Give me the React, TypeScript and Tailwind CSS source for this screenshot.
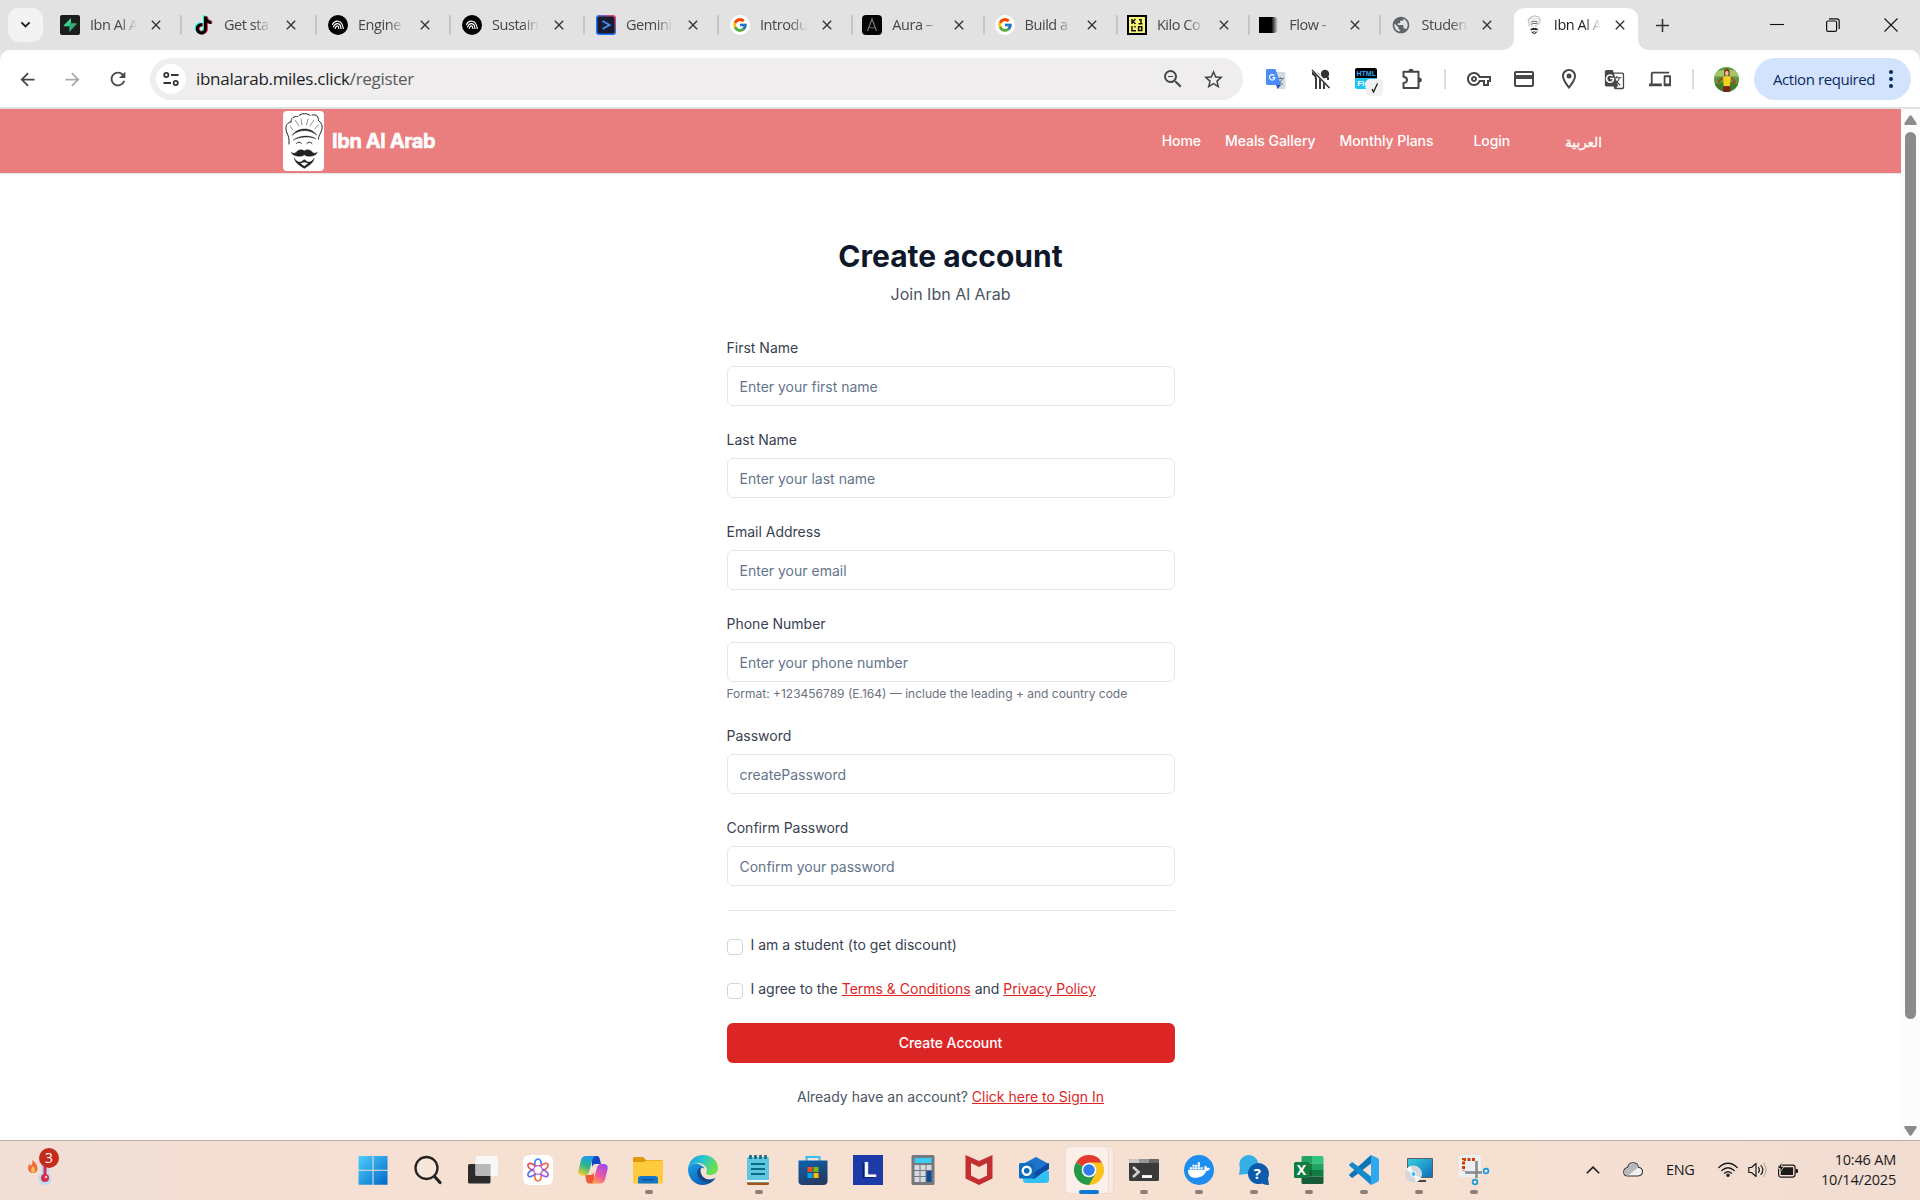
import React, { type ReactNode } from "react";
import {
  MdArrowBack,
  MdArrowForward,
  MdClose,
  MdCreditCard,
  MdDevices,
  MdGTranslate,
  MdOutlineLocationOn,
  MdOutlineVpnKey,
  MdPublic,
  MdRefresh,
  MdStarBorder,
  MdZoomOut,
} from "react-icons/md";
import { FcGoogle } from "react-icons/fc";
import { FaDocker } from "react-icons/fa";
import { IoLogoTiktok } from "react-icons/io5";

/* ---------- favicons ---------- */

function SupabaseIcon() {
  return (
    <svg viewBox="0 0 20 20" className="size-5">
      <rect width="20" height="20" rx="2" fill="#1c1c1c" />
      <path d="M11 3v8.200H4.200q-1 0-.4-1z" fill="#3ecf8e" />
      <path d="M9.300 17V8.300h6.800q1 0 .4 1z" fill="#2fae78" />
    </svg>
  );
}

function TiktokIcon() {
  return (
    <span className="relative size-5">
      <IoLogoTiktok className="absolute top-0 -left-px size-[19px] text-[#25f4ee]" />
      <IoLogoTiktok className="absolute top-px left-px size-[19px] text-[#fe2c55]" />
      <IoLogoTiktok className="absolute top-[0.5px] left-0 size-[19px] text-black" />
    </span>
  );
}

function ArcIcon() {
  return (
    <svg viewBox="0 0 20 20" className="size-5" fill="none" stroke="#fff" strokeWidth="1.200" strokeLinecap="round">
      <circle cx="10" cy="10" r="10" fill="#000" stroke="none" />
      <path d="M4.500 9.500C7 4.500 14 4.500 15.300 13.500" />
      <path d="M5.500 12C7.500 7 12.500 7.500 13 13.500" />
      <path d="M7.200 13.500C8.500 9.500 10.800 10.500 10.800 13.500" />
    </svg>
  );
}

function GeminiCodeIcon() {
  return (
    <svg viewBox="0 0 20 20" className="size-5">
      <defs>
        <linearGradient id="gem" x1="0" y1="1" x2="1" y2="0">
          <stop offset="0.4" stopColor="#1a73f8" />
          <stop offset="1" stopColor="#ff3b5c" />
        </linearGradient>
      </defs>
      <rect width="20" height="20" rx="3" fill="url(#gem)" />
      <rect x="1.500" y="1.500" width="17" height="17" rx="2" fill="#1b1b30" />
      <path d="m6.500 6 7 4-7 4" fill="none" stroke="#3f8cff" strokeWidth="2" />
    </svg>
  );
}

function GoogleIcon() {
  return (
    <span className="flex size-5 items-center justify-center rounded-full bg-white">
      <FcGoogle className="size-4" />
    </span>
  );
}

function AuraIcon() {
  return (
    <svg viewBox="0 0 20 20" className="size-5" fill="none" stroke="#777" strokeWidth="1.200">
      <rect width="20" height="20" rx="4" fill="#050505" stroke="none" />
      <path d="M5.500 16 10 4l4.500 12M7.500 12.500 12.500 13" />
    </svg>
  );
}

function KiloIcon() {
  return (
    <svg viewBox="0 0 20 20" className="size-5" fill="none" stroke="#111" strokeWidth="1.500">
      <rect x="1" y="1" width="18" height="18" fill="#f8f674" stroke="#000" strokeWidth="2" />
      <path d="M5 4v5M8.500 4 6 6.500 8.500 9M12 4.800h2V9M11.500 8.800h4M5 11v4.700h4M8 11v1.500M11.600 11.800h3.200v3.600h-3.200z" />
    </svg>
  );
}

function FlowIcon() {
  return (
    <svg viewBox="0 0 20 20" className="size-5">
      <defs>
        <linearGradient id="flow">
          <stop offset="0.650" stopColor="#000" />
          <stop offset="1" stopColor="#000" stopOpacity="0" />
        </linearGradient>
      </defs>
      <path d="M0 2h14q5 0 5 4v8q0 4-5 4H0z" fill="url(#flow)" />
    </svg>
  );
}

function ChefFace({ className }: { className: string }) {
  return (
    <svg viewBox="0 0 41 60" className={className} fill="none" stroke="#222" strokeLinecap="round">
      <path
        d="M6 33C6.500 28 5.500 25 4 22 1.500 16 3.500 12 7.500 11M8 11c0-4 3-6 6.500-5.500M16 4.500c3-2.500 8-2.500 11-.2M29 4c5-1 6.500 2 6.500 5.500M36 10c3.500 3 4 6 2 11-2 4-2.500 5-2.500 7"
        strokeWidth="1"
      />
      <path d="M12 9l4 6M18 8l1 6M25 8l-1.500 6M31 9l-4 6M7 15l3 4M35 14l-3 4" strokeWidth="0.500" />
      <path d="M9.500 24c5-8 19-8 24 0-6-6-18-6-24 0z" fill="#222" strokeWidth="0.500" />
      <path d="M10.500 29c5-4.500 17-5.500 22.500-1-6-3-17-2.500-22.500 1z" fill="#222" strokeWidth="0.400" />
      <path d="M13.500 32.500q2.500-3 5 0M24 32.500q2.500-3 5 0" strokeWidth="1" />
      <path
        d="M21.300 40c-2-2-6-1.500-7.500.7-1.500 1.800-4 2-5.500.5 1 4 10 5.500 13 2.500 3 3 12 1.500 13-2.500-1.500 1.500-4 1.300-5.500-.5C27.300 38.500 23.300 38 21.300 40z"
        fill="#222"
        strokeWidth="0.400"
      />
      <path
        d="M11.300 47c.5 5 5.500 7.500 10 10.500 4.500-3 9.500-5.500 10-10.500-2 3.500-4 4-6.500 4L21.300 48.500 17.800 51c-2.500 0-4.500-.5-6.500-4zm6 5.300 4-1.300 4 1.300-4 3z"
        fill="#222"
        fillRule="evenodd"
        strokeWidth="0.300"
      />
    </svg>
  );
}

/* ---------- browser chrome ---------- */

const tabs: { title: string; icon: ReactNode }[] = [
  { title: "Ibn Al A", icon: <SupabaseIcon /> },
  { title: "Get sta", icon: <TiktokIcon /> },
  { title: "Engine", icon: <ArcIcon /> },
  { title: "Sustain", icon: <ArcIcon /> },
  { title: "Gemini", icon: <GeminiCodeIcon /> },
  { title: "Introdu", icon: <GoogleIcon /> },
  { title: "Aura –", icon: <AuraIcon /> },
  { title: "Build a", icon: <GoogleIcon /> },
  { title: "Kilo Co", icon: <KiloIcon /> },
  { title: "Flow -", icon: <FlowIcon /> },
  { title: "Studen", icon: <MdPublic className="size-[22px] text-[#5f6368]" /> },
  { title: "Ibn Al A", icon: <ChefFace className="h-5 w-5" /> },
];

function TabStrip() {
  return (
    <div className="flex h-[50px] items-center bg-[#e2e2e2]">
      <div className="ml-2 flex h-[34px] w-[35px] items-center justify-center rounded-[11px] bg-[#f3f3f3]">
        <svg viewBox="0 0 12 8" className="w-[11px]" fill="none" stroke="#1f1f1f" strokeWidth="2">
          <path d="m1.500 1.500 4.500 4.500 4.500-4.500" />
        </svg>
      </div>
      <div className="ml-[5px] flex h-full">
        {tabs.map((tab, i) => {
          const active = i === tabs.length - 1;
          return (
            <div key={i} className={i < 5 ? "relative h-full w-[134px]" : "relative h-full w-[132.300px]"}>
              {active && (
                <svg viewBox="0 0 150 42" className="absolute -left-3 bottom-0 h-[42px] w-[150px]">
                  <path d="M0 42q14 0 14-13V12Q14 0 26 0h100q12 0 12 12v17q0 13 12 13z" fill="#fff" />
                </svg>
              )}
              <div className="relative flex h-full items-center pl-3">
                <span className="flex size-5 shrink-0 items-center justify-center">{tab.icon}</span>
                <span
                  className={
                    "ml-[10px] w-[50px] shrink-0 whitespace-nowrap font-['Open_Sans'] text-[14.500px] tracking-[-0.450px] [mask-image:linear-gradient(to_right,#000_60%,transparent_94%)] " +
                    (active ? "text-[#1f1f1f]" : "text-[#45474a]")
                  }
                >
                  {tab.title}
                </span>
                <MdClose className={i > 0 && i < 9 ? "ml-[9px] size-4 shrink-0 text-[#333]" : "ml-2 size-4 shrink-0 text-[#333]"} />
                {i < tabs.length - 2 && <span className="ml-4 h-5 w-[2px] shrink-0 rounded bg-[#c5c5c5]" />}
              </div>
            </div>
          );
        })}
      </div>
      <svg viewBox="0 0 14 14" className="ml-[12px] size-[13px]" stroke="#333" strokeWidth="1.700">
        <path d="M7 0v14M0 7h14" />
      </svg>
      <div className="ml-auto flex items-center">
        <svg viewBox="0 0 14 14" className="mr-[42px] size-[14px]" stroke="#111" strokeWidth="1.100">
          <path d="M0 6.500h14" />
        </svg>
        <svg viewBox="0 0 14 14" className="mr-[44px] size-[14px]" fill="none" stroke="#111" strokeWidth="1.200">
          <rect x="0.600" y="3" width="10" height="10.400" rx="1.500" />
          <path d="M3 .8h7.500q2.700 0 2.700 2.700v7.500" />
        </svg>
        <svg viewBox="0 0 14 14" className="mr-[22px] size-[14px]" stroke="#111" strokeWidth="1.100">
          <path d="m.5.5 13 13m0-13-13 13" />
        </svg>
      </div>
    </div>
  );
}

function Slot({ children }: { children: ReactNode }) {
  return <span className="flex w-[45.300px] shrink-0 items-center justify-center">{children}</span>;
}

function GoogleTranslateIcon() {
  return (
    <svg viewBox="0 0 22 22" className="size-[22px]">
      <path d="M8 4h11q1.500 0 1.500 1.500v14q0 1.500-1.500 1.500h-6z" fill="#d5d8dc" />
      <path d="M11.500 10.500h7.500M15.200 9v1.500M17.500 10.500q-1.500 4-5 6M13 12.500q2 3 5 4" stroke="#607d8b" fill="none" />
      <path d="m11 17 5 0-3.500 4z" fill="#3451b5" />
      <path d="M2 1h8.500L16 17H2.500Q1 17 1 15.500V2.500Q1 1 2 1z" fill="#4b8df8" />
      <path d="M9.300 7.700A2.700 2.700 0 1 0 9.800 9.700H7.400" stroke="#fff" strokeWidth="1.200" fill="none" />
    </svg>
  );
}

function NoIndexIcon() {
  return (
    <svg viewBox="0 0 20 20" className="size-5" fill="none" stroke="#333" strokeWidth="1.900">
      <circle cx="14" cy="5" r="4.200" fill="#333" stroke="none" />
      <path d="M2 3v2q3 1 3 5v10M6 4q3 2 3 6v10M9.500 9q3.500 1 3.500 5v6M17 8v3" />
      <path d="M1 0l18 18.500" stroke="#fff" strokeWidth="3" />
      <path d="M1 1l17.500 18" strokeWidth="1.500" />
    </svg>
  );
}

function HtmlFigmaIcon() {
  return (
    <span className="relative h-[22px] w-[22px]">
      <span className="absolute inset-x-0 top-0 h-[10px] rounded-t-[2px] bg-black text-center font-['Liberation_Sans'] text-[7px] leading-[11px] font-bold text-[#35a7ff]">
        HTML
      </span>
      <span className="absolute inset-x-0 top-[10px] h-[11px] rounded-b-[2px] bg-[#20c4f4] pl-[2px] font-['Liberation_Sans'] text-[8px] leading-[11px] font-bold text-white">
        Fig
      </span>
      <span className="absolute top-[11px] left-[11px] flex h-[17px] w-[17px] items-center justify-center rounded-[4px] bg-[#f1f1f1]">
        <svg viewBox="0 0 10 10" className="size-[10px]" fill="none" stroke="#111" strokeWidth="1.200">
          <path d="m2 6 1.500 3L7.500.5" />
        </svg>
      </span>
    </span>
  );
}

function PuzzleIcon() {
  return (
    <svg viewBox="0 0 22 22" className="size-[22px]" fill="none" stroke="#474747" strokeWidth="2" strokeLinejoin="round">
      <path d="M2.500 3.800h15V20h-15v-5q3.500-.5 3.500-3.100T2.500 8.800z" />
      <path d="M7.500 3.500a2.500 2.800 0 0 1 5 0zM18 9.400a2.800 2.500 0 0 1 0 5z" fill="#474747" stroke="none" />
    </svg>
  );
}

function Avatar() {
  return (
    <svg viewBox="0 0 26 26" className="size-[25px]">
      <defs>
        <clipPath id="avatar">
          <circle cx="13" cy="13" r="13" />
        </clipPath>
      </defs>
      <g clipPath="url(#avatar)">
        <rect width="26" height="26" fill="#5c9a3c" />
        <path d="M0 6q8-5 26-2v6H0z" fill="#a6c46a" />
        <path d="M0 18q13-4 26 0v8H0z" fill="#3f7d2c" />
        <path d="M10.500 3q3-2.500 5.500 0l.5 6h-6z" fill="#7b3a1e" />
        <ellipse cx="13.300" cy="6.500" rx="1.800" ry="2.600" fill="#f1bd92" />
        <path d="M9.500 10.500q4-2 8 0L16.500 20H10z" fill="#f3d21c" />
        <path d="M9 11 4.500 15l2 1M18 11l4 4.500-4 1.500" fill="none" stroke="#b33a25" strokeWidth="1.600" />
        <path d="M9.500 20h7.500v6H9.500z" fill="#7c2018" />
      </g>
    </svg>
  );
}

function Toolbar() {
  return (
    <div className="h-[59px] bg-[#e2e2e2]">
      <div className="flex h-[57px] items-center rounded-t-[10px] bg-white pt-px text-[#474747]">
        <MdArrowBack className="ml-[17px] size-[21px]" />
        <MdArrowForward className="ml-6 size-[21px] text-[#aaa]" />
        <MdRefresh className="ml-[24px] size-[22px]" />
        <div className="ml-[21px] flex h-[42px] w-[1093px] items-center rounded-full bg-[#efedee]">
          <span className="ml-[6px] flex size-[30px] items-center justify-center rounded-full bg-white">
            <svg viewBox="0 0 16 16" className="size-4" fill="none" stroke="#333" strokeWidth="1.800">
              <circle cx="3.300" cy="4" r="2.100" />
              <path d="M8 4h7.500M.5 12H8" />
              <circle cx="12.700" cy="12" r="2.100" />
            </svg>
          </span>
          <span className="ml-[10px] font-['Open_Sans'] text-[17px] tracking-[-0.290px] whitespace-nowrap text-[#1f1f1f]">
            ibnalarab.miles.click<span className="text-[#5a5a5a]">/register</span>
          </span>
          <MdZoomOut className="ml-auto size-6" />
          <MdStarBorder className="mr-[18px] ml-[17px] size-[23px]" />
        </div>
        <div className="ml-[10px] flex items-center">
          <Slot><GoogleTranslateIcon /></Slot>
          <Slot><NoIndexIcon /></Slot>
          <Slot><HtmlFigmaIcon /></Slot>
          <Slot><PuzzleIcon /></Slot>
          <span className="mx-[10px] h-5 w-[2px] bg-[#dcdcdc]" />
          <Slot><MdOutlineVpnKey className="size-[24px]" /></Slot>
          <Slot><MdCreditCard className="size-[24px]" /></Slot>
          <Slot><MdOutlineLocationOn className="size-[24px]" /></Slot>
          <Slot><MdGTranslate className="size-[21px]" /></Slot>
          <Slot><MdDevices className="size-[22px]" /></Slot>
          <span className="ml-[9px] h-5 w-[2px] bg-[#dcdcdc]" />
        </div>
        <span className="ml-5"><Avatar /></span>
        <div className="mr-[9px] ml-auto flex h-[42px] w-[157px] items-center rounded-full bg-[#d3e3fd] pl-[19px]">
          <span className="font-['Open_Sans'] text-[15px] tracking-[-0.420px] whitespace-nowrap text-[#0b2a5e]">
            Action required
          </span>
          <svg viewBox="0 0 4 18" className="mr-[18px] ml-auto h-[18px] w-1" fill="#0b2a5e">
            <circle cx="2" cy="2" r="2" />
            <circle cx="2" cy="9" r="2" />
            <circle cx="2" cy="16" r="2" />
          </svg>
        </div>
      </div>
    </div>
  );
}

/* ---------- page ---------- */

function SiteNav() {
  return (
    <header className="flex h-[65px] items-center border-b border-[#e5e7eb] bg-[#ea7d7d] pr-[299px] pl-[283px] text-white">
      <div className="flex h-[60px] w-[41px] items-center justify-center rounded-[4px] bg-white">
        <ChefFace className="h-[60px] w-[41px]" />
      </div>
      <span className="ml-2 text-xl font-bold tracking-[-0.400px] whitespace-nowrap [-webkit-text-stroke:0.500px_white]">
        Ibn Al Arab
      </span>
      <nav className="ml-auto flex items-center text-sm font-medium tracking-[-0.060px] whitespace-nowrap">
        <a>Home</a>
        <a className="ml-6">Meals Gallery</a>
        <a className="ml-6">Monthly Plans</a>
        <a className="ml-10">Login</a>
        <a className="ml-[55px] pt-px font-['DejaVu_Sans'] text-[13.500px] leading-5 tracking-normal [-webkit-text-stroke:0.300px_white]">العربية</a>
      </nav>
    </header>
  );
}

function Field({ label, placeholder, hint, type = "text" }: { label: string; placeholder: string; hint?: string; type?: string }) {
  return (
    <div>
      <label className="mb-2 block text-sm leading-5 text-[#374151]">{label}</label>
      <input
        type={type}
        placeholder={placeholder}
        className="block h-10 w-full rounded-md border border-[#e2e8f0] bg-white px-3 text-sm placeholder:text-[#64748b]"
      />
      {hint && <p className="mt-1 text-xs leading-4 text-[#6b7280]">{hint}</p>}
    </div>
  );
}

function Check({ children }: { children: ReactNode }) {
  return (
    <label className="flex h-5 items-start text-sm leading-5 whitespace-nowrap text-[#374151]">
      <span className="mt-1 mr-2 size-4 shrink-0 rounded-[4px] border border-[#d1d5db] bg-white" />
      <span>{children}</span>
    </label>
  );
}

function Register() {
  return (
    <main className="mx-auto w-[448px] pt-16">
      <h1 className="text-center text-3xl leading-9 font-bold text-[#0f172a]">Create account</h1>
      <p className="mt-2 text-center text-base leading-6 text-[#4b5563]">Join Ibn Al Arab</p>
      <form className="mt-8 flex flex-col gap-6">
        <Field label="First Name" placeholder="Enter your first name" />
        <Field label="Last Name" placeholder="Enter your last name" />
        <Field label="Email Address" placeholder="Enter your email" />
        <Field
          label="Phone Number"
          placeholder="Enter your phone number"
          hint="Format: +123456789 (E.164) — include the leading + and country code"
        />
        <Field label="Password" placeholder="createPassword" type="password" />
        <Field label="Confirm Password" placeholder="Confirm your password" type="password" />
        <hr className="border-[#e2e8f0]" />
        <Check>I am a student (to get discount)</Check>
        <Check>
          I agree to the <a className="text-[#dc2626] underline">Terms &amp; Conditions</a> and{" "}
          <a className="text-[#dc2626] underline">Privacy Policy</a>
        </Check>
        <button type="button" className="h-10 rounded-md bg-[#dc2626] text-sm font-medium tracking-[-0.060px] text-white">
          Create Account
        </button>
        <p className="text-center text-sm leading-5 text-[#4b5563]">
          Already have an account? <a className="text-[#dc2626] underline">Click here to Sign In</a>
        </p>
      </form>
    </main>
  );
}

function Scrollbar() {
  return (
    <div className="flex w-[19px] shrink-0 flex-col items-center bg-[#fcfcfc] text-[#8b8b8b]">
      <svg viewBox="0 0 13 10" className="mt-[6px] h-[10px] w-[13px]" fill="currentColor">
        <path d="M5.500.8q1-1 2 0L12.500 8q.5 2-1 2h-10q-1.500 0-1-2z" />
      </svg>
      <div className="mt-[7px] h-[887px] w-[11px] rounded-full bg-[#8b8b8b]" />
      <svg viewBox="0 0 13 10" className="mt-auto mb-[4px] h-[10px] w-[13px] rotate-180" fill="currentColor">
        <path d="M5.500.8q1-1 2 0L12.500 8q.5 2-1 2h-10q-1.500 0-1-2z" />
      </svg>
    </div>
  );
}

/* ---------- taskbar icons ---------- */

const box = "size-[30px]";

function StartIcon() {
  return (
    <svg viewBox="0 0 30 30" className={box}>
      <defs>
        <linearGradient id="win" x1="0" y1="0" x2="1" y2="1">
          <stop stopColor="#4fd0ff" />
          <stop offset="1" stopColor="#0067c8" />
        </linearGradient>
      </defs>
      <path fill="url(#win)" d="M.5 1.500q0-.5.500-.5h13.500v13.700H.500zM15.500 1H29q.5 0 .5.500v13.200h-14zM.5 15.700h14v14H1q-.5 0-.5-.5zM15.500 15.700h14v13.500q0 .5-.5.500H15.500z" />
    </svg>
  );
}

function SearchIcon() {
  return (
    <svg viewBox="0 0 30 30" className={box} fill="none" stroke="#222" strokeWidth="2.300" strokeLinecap="round">
      <circle cx="13.500" cy="13" r="11" fill="#f9ece5" fillOpacity=".5" />
      <path d="m22 22 5 5.500" strokeWidth="3.200" />
    </svg>
  );
}

function TaskViewIcon() {
  return (
    <svg viewBox="0 0 30 30" className={box}>
      <rect x="0" y="9" width="22.500" height="19.500" rx="1.500" fill="#2c2c2c" />
      <rect x="7.500" y="1" width="22.500" height="20" rx="1.500" fill="#f8f8f8" fillOpacity=".92" />
      <path d="M7.500 9h15v12H9q-1.500 0-1.500-1.500z" fill="#b8b8b8" />
    </svg>
  );
}

function FlowerIcon() {
  return (
    <svg viewBox="0 0 30 30" className={box} fill="none" strokeWidth="1.700">
      <rect width="30" height="30" rx="6" fill="#fff" />
      <path d="M11.500 11.500q0-7.500 3.500-7.500t3.500 7.500" stroke="#3f83f0" />
      <path d="M11.500 18.500q0 7.500 3.500 7.500t3.500-7.500" stroke="#f4743b" />
      <path d="M13 11Q6 6.500 5 9.500T10.500 16" stroke="#ea4d5a" />
      <path d="M17 11q7-4.500 8-1.500T19.500 16" stroke="#f0644e" />
      <path d="M10.500 14Q4 17.500 5 20.500T13 19" stroke="#5a6de8" />
      <path d="M19.500 14q6.500 3.500 5.500 6.500T17 19" stroke="#9b59e0" />
      <circle cx="15" cy="15" r="4.300" stroke="#b65bd2" strokeWidth="1.200" />
    </svg>
  );
}

function CopilotIcon() {
  return (
    <svg viewBox="0 0 30 30" className={box}>
      <defs>
        <linearGradient id="cpa" x1="0.600" y1="0" x2="0.200" y2="1">
          <stop stopColor="#1c9cf0" />
          <stop offset=".5" stopColor="#2db58a" />
          <stop offset="1" stopColor="#ffd02e" />
        </linearGradient>
        <linearGradient id="cpb" x1="0.700" y1="0" x2="0.200" y2="1">
          <stop stopColor="#a04cf0" />
          <stop offset=".55" stopColor="#f0579b" />
          <stop offset="1" stopColor="#ffa64d" />
        </linearGradient>
      </defs>
      <path d="M14 1h5q2 0 2.500 2l1.500 6h-6q-2 0-3 3z" fill="#1146c7" />
      <path d="M16 28.500h-5q-2 0-2.500-2L7 20h6q2 0 3-3z" fill="#f05a35" />
      <path d="M8 1h9.500q-2 0-3 3.500L11 17q-1 3.500-4 3.500H4Q-.5 20.500.500 15L3 5q1-4 5-4z" fill="url(#cpa)" />
      <path d="M22 28.500h-9.500q2 0 3-3.500L19 12.500q1-3.500 4-3.500h3q4.500 0 3.500 5.500L27 24.500q-1 4-5 4z" fill="url(#cpb)" />
    </svg>
  );
}

function ExplorerIcon() {
  return (
    <svg viewBox="0 0 30 30" className={box}>
      <path d="M0 3.500Q0 2 1.500 2H10l3 3h15.500Q30 5 30 6.500V10H0z" fill="#dc9a06" />
      <path d="M0 7h11l2-1.500h17V27q0 1.500-1.500 1.500h-27Q0 28.500 0 27z" fill="#fecb3e" />
      <path d="M5 28.500V24q0-3 3-3h14q3 0 3 3v4.500z" fill="#1476c9" />
      <path d="M9 24.700h12" stroke="#0b4d8f" strokeWidth="1.300" />
    </svg>
  );
}

function EdgeIcon() {
  return (
    <svg viewBox="0 0 30 30" className={box}>
      <defs>
        <linearGradient id="edt" x1="0" y1="0" x2="1" y2="0.400">
          <stop stopColor="#1b9de0" />
          <stop offset=".5" stopColor="#2ac5cf" />
          <stop offset="1" stopColor="#6be04b" />
        </linearGradient>
        <linearGradient id="edb" x1="0" y1="0" x2="1" y2="1">
          <stop stopColor="#1aa0ea" />
          <stop offset="1" stopColor="#0b4aa0" />
        </linearGradient>
      </defs>
      <path d="M0 14C1 5 7 0 15 0c9 0 15 6 15 13 0 5-4 7-7.500 7-4 0-5-1.500-4-3 1-2 .5-6-5.500-8.500C8 7 2 9 0 14z" fill="url(#edt)" />
      <path d="M0 14C2 8 8 7.500 12.500 10c3 1.500 4 3.500 4 3.500-4-2-6 2-4.500 6 2 5 9 7 15.500 3.500C25 27 20 30 15 30 6 30 0 23 0 14z" fill="url(#edb)" />
      <path d="M13 12q-5.500 3-3 9.500Q13 27.500 22 27.500q3-1.500 5.500-4.500-6 3-11 0-5.500-4-3.500-11z" fill="#114a8b" />
    </svg>
  );
}

function NotepadIcon() {
  return (
    <svg viewBox="0 0 30 30" className={box}>
      <rect x="4" y="2" width="22" height="26" rx="1.500" fill="#5fc6df" />
      <path d="M4 25h22v2H4z" fill="#f5f5f5" />
      <path d="M4 27.500h22v1q0 1.500-1.500 1.500h-19Q4 30 4 28.500z" fill="#a85416" />
      <path d="M8 9h14M8 14h14M8 19h14" stroke="#0b6a86" strokeWidth="2" />
      <path d="M7.500 0v4M12.500 0v4M17.500 0v4M22.500 0v4" stroke="#176883" strokeWidth="2.600" />
    </svg>
  );
}

function StoreIcon() {
  return (
    <svg viewBox="0 0 30 30" className={box}>
      <defs>
        <linearGradient id="st" x1="0" y1="0" x2="0.500" y2="1">
          <stop stopColor="#0b63b3" />
          <stop offset="1" stopColor="#243a62" />
        </linearGradient>
      </defs>
      <path d="M8.500 7V2h13v5" fill="none" stroke="#33bff3" strokeWidth="2" />
      <path d="M.5 5.500h29V26q0 4-4 4h-21q-4 0-4-4z" fill="url(#st)" />
      <path d="M9.500 12h5v5h-5z" fill="#f25022" />
      <path d="M15.500 12h5v5h-5z" fill="#7fba00" />
      <path d="M9.500 18h5v5h-5z" fill="#00a4ef" />
      <path d="M15.500 18h5v5h-5z" fill="#ffb900" />
    </svg>
  );
}

function LetterIcon() {
  return (
    <span className="flex size-[30px] items-center justify-center bg-[#1c3ba8] pl-[3px] font-['Liberation_Sans'] text-[22px] leading-none font-bold text-white [text-shadow:-2px_1px_0_#0d1e66]">
      L
    </span>
  );
}

function CalculatorIcon() {
  return (
    <svg viewBox="0 0 30 30" className={box}>
      <rect x="3.500" width="23" height="30" rx="1.500" fill="#75797f" />
      <rect x="6.500" y="3" width="17" height="5" fill="#3ccbf4" />
      <path d="M6.500 10h5v5h-5zM12.500 10h5v5h-5zM18.500 10h5v5h-5zM6.500 16h5v5h-5zM12.500 16h5v5h-5zM6.500 22h5v5h-5zM12.500 22h5v5h-5z" fill="#d6dbe0" />
      <path d="M18.500 16h5v11h-5z" fill="#0f4a92" />
    </svg>
  );
}

function McafeeIcon() {
  return (
    <svg viewBox="0 0 30 30" className={box}>
      <path d="M1.500 0 15 6 28.500 0v23.500L15 30 1.500 23.500zM7 8v12.500l8 4 8-4V8l-8 4z" fill="#c12f31" fillRule="evenodd" />
    </svg>
  );
}

function OutlookIcon() {
  return (
    <svg viewBox="0 0 30 30" className={box}>
      <path d="M4 9 17 2l13 7v5L4 22z" fill="#1c73c8" />
      <path d="m15 18 15-10v6L15 24z" fill="#0a3f96" />
      <path d="M4 16h26v9q0 3-3 3H7q-3 0-3-3z" fill="#33c0f4" />
      <path d="M4 17h11L30 9v4L15 24z" fill="#0a4aa5" />
      <rect y="8" width="15.500" height="15.500" rx="1.500" fill="#0f6cbd" />
      <circle cx="7.700" cy="15.700" r="4" fill="none" stroke="#fff" strokeWidth="2.400" />
    </svg>
  );
}

function ChromeIcon() {
  return (
    <svg viewBox="0 0 30 30" className={box}>
      <path d="M15 15 2 7.500A15 15 0 0 1 28 7.500z" fill="#e23b2e" />
      <path d="M15 15V7.500h13A15 15 0 0 1 15 30z" fill="#fcc31e" />
      <path d="M15 15l6.500 3.700L15 30A15 15 0 0 1 2 7.500z" fill="#259a48" />
      <circle cx="15" cy="15" r="7.300" fill="#fff" />
      <circle cx="15" cy="15" r="5.800" fill="#2f7cee" />
    </svg>
  );
}

function TerminalIcon() {
  return (
    <svg viewBox="0 0 30 30" className={box}>
      <rect y="4" width="30" height="22" rx="1.500" fill="#3a3a3a" />
      <path d="M0 8V5.500Q0 4 1.500 4H10v4z" fill="#c8c8c8" />
      <path d="M10 4h10v4H10z" fill="#969696" />
      <path d="M20 4h8.500Q30 4 30 5.500V8H20z" fill="#666" />
      <path d="m4 12 5.500 5L4 22" fill="none" stroke="#d0d0d0" strokeWidth="2.600" />
      <path d="M13 21.500h10" stroke="#fff" strokeWidth="2.800" />
    </svg>
  );
}

function DockerIcon() {
  return (
    <span className="flex size-[30px] items-center justify-center rounded-full bg-[#1d8df0]">
      <FaDocker className="size-[22px] text-white" />
    </span>
  );
}

function HelpIcon() {
  return (
    <span className="relative size-[30px]">
      <svg viewBox="0 0 30 30" className={box}>
        <path d="M0 20l1-7A9.500 9.500 0 1 1 9 19q-4 0-9 1z" fill="#34b0e6" />
        <path d="m30 30-1-7a10.500 10.500 0 1 0-6 5.500q3 1.500 7 1.500z" fill="#0d5cab" />
      </svg>
      <span className="absolute top-[9px] left-[15px] font-['Open_Sans'] text-[15px] leading-[19px] font-bold text-white">?</span>
    </span>
  );
}

function ExcelIcon() {
  return (
    <span className="relative size-[30px]">
      <svg viewBox="0 0 30 30" className={box}>
        <path d="M7.500 2.500Q7.500 1 9 1h9v7.500H7.500z" fill="#21a366" />
        <path d="M18 1h10q1.500 0 1.500 1.500v6H18z" fill="#33c481" />
        <path d="M7.500 8.500H18V15H7.500z" fill="#107c41" />
        <path d="M18 8.500h11.500V15H18z" fill="#21a366" />
        <path d="M7.500 15H18v6.500H7.500z" fill="#155c3b" />
        <path d="M18 15h11.500v6.500H18z" fill="#107c41" />
        <path d="M7.500 21.500h22v6q0 1.500-1.500 1.500H9q-1.500 0-1.500-1.500z" fill="#185c37" />
        <rect y="7" width="15.500" height="16" rx="1.500" fill="#107c41" />
      </svg>
      <span className="absolute top-[7px] left-[3px] font-['Open_Sans'] text-[14px] leading-4 font-bold text-white">X</span>
    </span>
  );
}

function VscodeIcon() {
  return (
    <svg viewBox="0 0 30 30" className={box}>
      <path d="m22 0v8.500L4 22.500q-.7.700-1.500 0L.5 20.700q-.8-.8 0-1.500z" fill="#0d74b8" />
      <path d="m22 30v-8.500L4 7.500q-.7-.7-1.500 0L.5 9.300q-.8.8 0 1.500z" fill="#1489cc" />
      <path d="M22 0l6.500 3Q30 3.700 30 5v20q0 1.300-1.500 2L22 30z" fill="#2fa8ee" />
    </svg>
  );
}

function RemoteIcon() {
  return (
    <svg viewBox="0 0 30 30" className={box}>
      <defs>
        <linearGradient id="rm" x1="0" y1="0" x2="1" y2="1">
          <stop stopColor="#33d0e0" />
          <stop offset="1" stopColor="#0f6dbd" />
        </linearGradient>
      </defs>
      <rect x="3" y="3" width="26" height="20" rx="1" fill="#5a6066" />
      <rect x="4" y="4" width="24" height="18" fill="url(#rm)" />
      <path d="M13 25h9v2h-9z" fill="#444" />
      <circle cx="9.500" cy="19" r="8.500" fill="#d3d7db" />
      <path d="M9.500 19 2 15a8.500 8.500 0 0 1 5-4zM9.500 19l7.500 4a8.500 8.500 0 0 1-5 4z" fill="#f6f7f8" />
      <circle cx="9.500" cy="19" r="2.500" fill="#4fb6e6" stroke="#fff" />
    </svg>
  );
}

function SnipIcon() {
  return (
    <svg viewBox="0 0 30 30" className="size-[30px] overflow-visible">
      <rect width="22" height="22" rx="2" fill="#edeff1" />
      <path d="M16 4.500H4.500V16" fill="none" stroke="#d83b01" strokeWidth="3" strokeDasharray="3 1.500" />
      <path d="M17.500 6v17M6 17.500h17" stroke="#84898e" strokeWidth="2.500" />
      <circle cx="16" cy="27" r="2.400" fill="none" stroke="#1c9be0" strokeWidth="1.700" />
      <circle cx="27" cy="16" r="2.400" fill="none" stroke="#1c9be0" strokeWidth="1.700" />
    </svg>
  );
}

const apps: { icon: ReactNode; open?: boolean; active?: boolean }[] = [
  { icon: <StartIcon /> },
  { icon: <SearchIcon /> },
  { icon: <TaskViewIcon /> },
  { icon: <FlowerIcon /> },
  { icon: <CopilotIcon /> },
  { icon: <ExplorerIcon />, open: true },
  { icon: <EdgeIcon /> },
  { icon: <NotepadIcon />, open: true },
  { icon: <StoreIcon /> },
  { icon: <LetterIcon /> },
  { icon: <CalculatorIcon /> },
  { icon: <McafeeIcon /> },
  { icon: <OutlookIcon /> },
  { icon: <ChromeIcon />, active: true },
  { icon: <TerminalIcon />, open: true },
  { icon: <DockerIcon />, open: true },
  { icon: <HelpIcon />, open: true },
  { icon: <ExcelIcon />, open: true },
  { icon: <VscodeIcon />, open: true },
  { icon: <RemoteIcon />, open: true },
  { icon: <SnipIcon />, open: true },
];

function WeatherWidget() {
  return (
    <div className="relative h-full w-[345.500px] shrink-0">
      <svg viewBox="0 0 40 40" className="absolute top-[5px] left-[24px] size-10">
        <path d="M8.500 14q5 4 5 8.500Q13 27 9 27t-5-4.500q0-3 2-5 0 2 1 2.500 2-2.500 1.500-6z" fill="#f1693c" />
        <path d="M9 20q2.500 2.500 2 4.500-.5 2-2 2t-2-2q0-2 2-4.500z" fill="#ffc65a" />
        <path d="M17 14h8v13.500a6.500 6.500 0 1 1-8 0z" fill="#bcdcf6" />
        <path d="M21 16v17" stroke="#d42a4c" strokeWidth="3" />
        <circle cx="21" cy="32" r="4" fill="#d42a4c" />
        <circle cx="22" cy="31" r="1.300" fill="#f8c4cf" />
      </svg>
      <span className="absolute top-[7px] left-[39px] flex size-5 items-center justify-center rounded-full bg-[#c42b1c] font-['Open_Sans'] text-[14px] leading-none text-white">
        3
      </span>
    </div>
  );
}

function Tray() {
  return (
    <div className="ml-auto flex h-full shrink-0 items-center pb-[2px] text-[#1b1b1b]">
      <svg viewBox="0 0 14 8" className="h-2 w-[14px]" fill="none" stroke="currentColor" strokeWidth="1.600">
        <path d="m.8 7.200 6.200-6 6.200 6" />
      </svg>
      <svg viewBox="0 0 20 15" className="ml-[23px] h-[15px] w-5" stroke="#333" strokeWidth="1.100">
        <path d="M5 14Q.7 14 .7 10q0-3.500 3.800-4.500Q6 .8 10 .8q4.500 0 5.500 4.500 4 .7 4 4.500T15 14z" fill="#f0f0f0" />
        <path d="M5 13.500Q1.200 13.500 1.200 10 1.500 6.500 5 6q2-4 6-4.500 3 .5 4 4z" fill="#b5b8bb" stroke="none" />
      </svg>
      <span className="ml-[23px] w-7 font-['Open_Sans'] text-[14.500px] tracking-[-0.400px]">ENG</span>
      <svg viewBox="0 0 20 15" className="ml-[24px] h-[15px] w-5" fill="none" stroke="currentColor" strokeWidth="1.300" strokeLinecap="round">
        <path d="M.8 5.500q9.200-8.500 18.400 0M3.800 8.500q6.200-5.500 12.400 0M6.600 11.200q3.400-3 6.800 0" />
        <circle cx="10" cy="13.200" r="1.100" fill="currentColor" />
      </svg>
      <svg viewBox="0 0 20 16" className="ml-[10px] h-4 w-5" fill="none" stroke="currentColor" strokeWidth="1.200" strokeLinecap="round">
        <path d="M.8 5.500h2.700L8 1.500v13L3.500 10.500H.8z" strokeLinejoin="round" />
        <path d="M10.500 5.500q1.800 2.500 0 5M13 3.500q3.600 4.500 0 9" />
        <path d="M15.600 1.500q5 6.500 0 13" stroke="#b9a9a0" />
      </svg>
      <svg viewBox="0 0 21 16" className="ml-[9px] h-4 w-[21px]">
        <rect x="1.600" y="3.100" width="16.500" height="12" rx="2.500" fill="none" stroke="currentColor" strokeWidth="1.200" />
        <path d="M3.700 5.300h12.400V13H3.700zM18.700 7h1.300q1 0 1 1v2q0 1-1 1h-1.300z" fill="currentColor" />
        <path d="M5 0 .5 6.500h2.800L2.500 11 7 4.500H4.500z" fill="currentColor" stroke="#f5dfd2" strokeWidth=".7" />
      </svg>
      <div className="mr-6 ml-[20px] flex w-[78px] flex-col items-end font-['Open_Sans'] text-[14.500px] leading-5 tracking-[-0.200px] whitespace-nowrap">
        <span>10:46 AM</span>
        <span>10/14/2025</span>
      </div>
    </div>
  );
}

function Taskbar() {
  return (
    <footer className="flex h-[60px] items-center border-t border-[#bdafa6] bg-[#f5dfd2] bg-[linear-gradient(90deg,#f1ded5,#f6e0d2_25%,#f6e0d2_80%,#f1dcd2)]">
      <WeatherWidget />
      <div className="flex h-full">
        {apps.map((app, i) => (
          <div key={i} className="relative flex h-full w-[55.050px] items-center justify-center">
            {app.active && (
              <>
                <span className="absolute top-[5px] left-[10px] h-12 w-[43px] rounded-[5px] border border-[#ecd9ce] bg-[#f9e9e0]" />
                <span className="absolute top-[5px] left-1 h-12 w-[44px] rounded-[5px] border border-[#ecdcd2] bg-[#fbf0e9]" />
                <span className="absolute bottom-[6px] left-[18px] h-1 w-5 rounded-full bg-[#0a78d4]" />
              </>
            )}
            <span className="relative flex pb-[2px]">{app.icon}</span>
            {app.open && <span className="absolute bottom-[6px] left-[24px] h-1 w-2 rounded-full bg-[#8b7f78]" />}
          </div>
        ))}
      </div>
      <Tray />
    </footer>
  );
}

export default function App() {
  return (
    <div className="flex h-[1200px] w-[1920px] flex-col overflow-hidden bg-white font-['Inter',sans-serif]">
      <TabStrip />
      <Toolbar />
      <div className="flex min-h-0 flex-1">
        <div className="min-w-0 flex-1">
          <SiteNav />
          <Register />
        </div>
        <Scrollbar />
      </div>
      <Taskbar />
    </div>
  );
}
